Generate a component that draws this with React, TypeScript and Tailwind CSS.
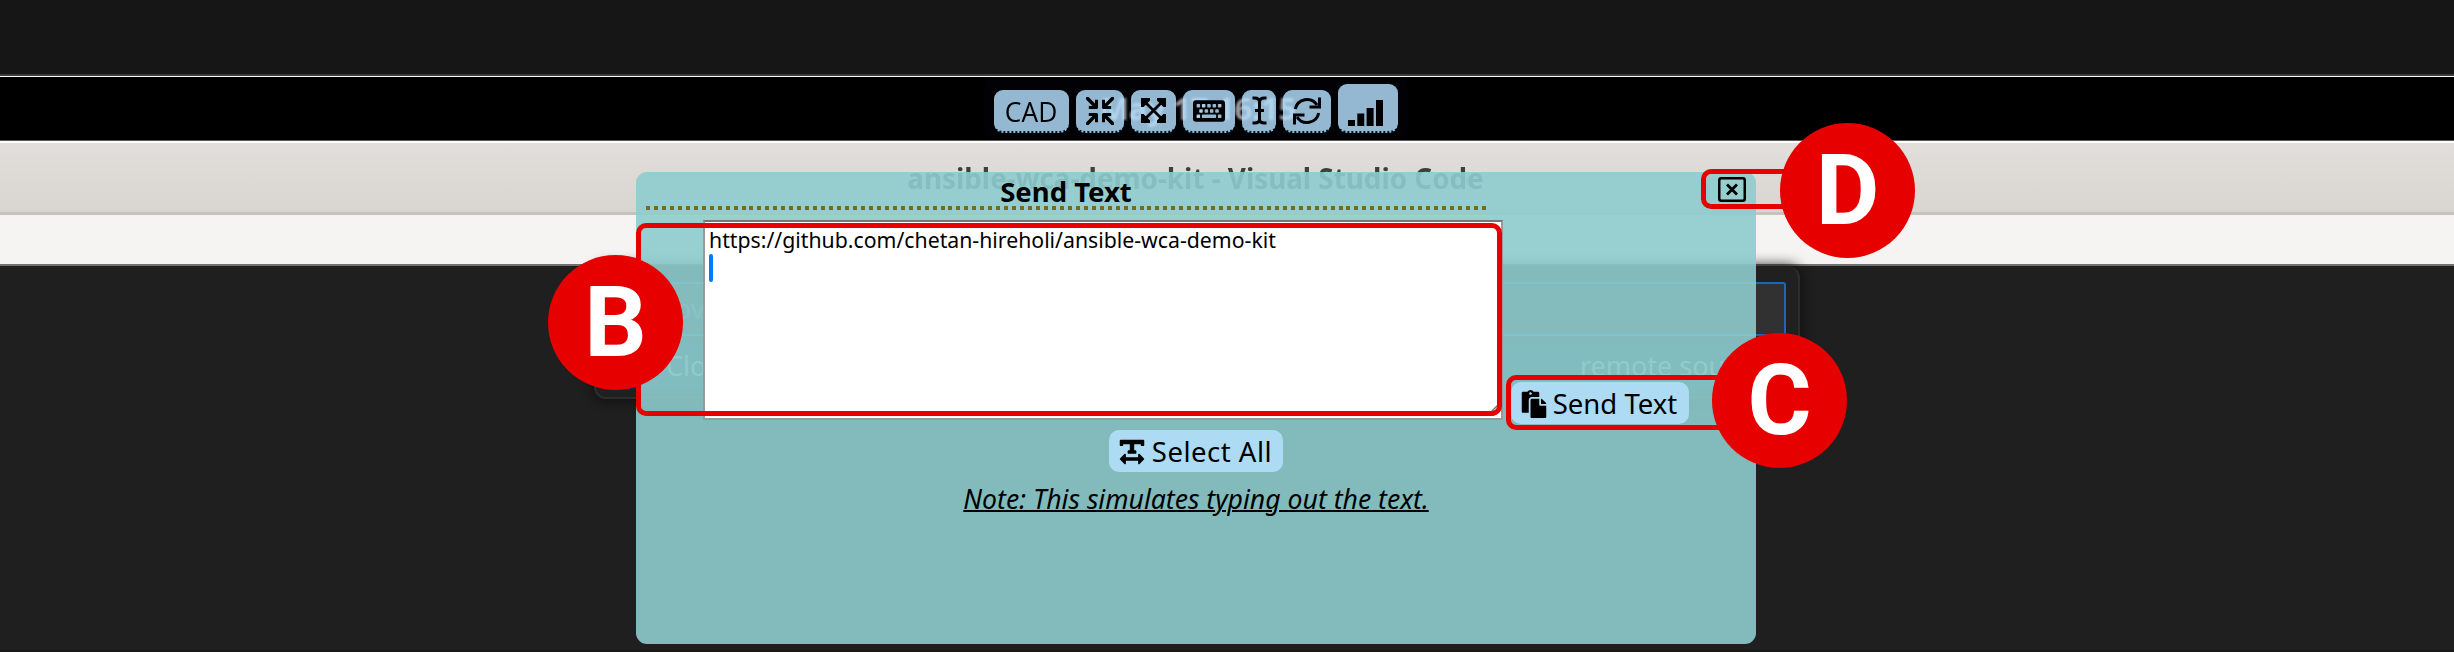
import React from "react";
import { FaKeyboard, FaPaste, FaTextWidth } from "react-icons/fa";

const toolButton =
  "flex h-[43px] shrink-0 items-center justify-center rounded-[9px] border-b-2 border-dotted border-[#05131f] bg-[#b4e0ff]/82 text-black";

function Inward() {
  return (
    <svg className="size-7" viewBox="0 0 28 28" fill="none" stroke="currentColor" strokeWidth="3" strokeLinejoin="round">
      <path d="M1.500 1.500 9.500 9.500M26.500 1.500 18.500 9.500M1.500 26.500 9.500 18.500M26.500 26.500 18.500 18.500" strokeWidth="3.400" strokeLinecap="round" />
      <path d="M10.500 2.800V10.500H2.800M17.500 2.800V10.500H25.200M2.800 17.500H10.500V25.200M25.200 17.500H17.500V25.200" />
    </svg>
  );
}

function Outward() {
  return (
    <svg className="size-[25px]" viewBox="0 0 25 25" fill="none" stroke="currentColor" strokeWidth="2.8">
      <path d="M3 3 22 22M22 3 3 22" />
      <path fill="currentColor" stroke="none" d="M0 0H9V2.500L2.500 9H0ZM25 0V9H22.500L16 2.500V0ZM0 25V16H2.500L9 22.500V25ZM25 25H16V22.500L22.500 16H25Z" />
    </svg>
  );
}

function TextCursor() {
  return (
    <svg className="h-[29px] w-[15px]" viewBox="0 0 15 29" fill="none" stroke="currentColor" strokeWidth="3">
      <path d="M0.500 2H2.500Q7.500 2 7.500 6V23Q7.500 27 2.500 27H0.500M14.500 2H12.500Q7.500 2 7.500 6M14.500 27H12.500Q7.500 27 7.500 23M3 14.500H12" />
    </svg>
  );
}

function Refresh() {
  return (
    <svg className="size-7" viewBox="0 0 28 28" fill="none" stroke="currentColor" strokeWidth="3">
      <path d="M2.300 12A11.900 11.900 0 0 1 24 8M25.700 16A11.900 11.900 0 0 1 4 20" />
      <path d="M26.500 0.500V10H16.500M1.500 27.500V18H11.500" />
    </svg>
  );
}

function Signal() {
  return (
    <svg className="h-[26px] w-[35px]" viewBox="0 0 35 26" fill="currentColor">
      <path d="M0 20H7V26H0ZM9.300 13.500H16.300V26H9.300ZM18.600 8H25.600V26H18.600ZM28 0H35V26H28Z" />
    </svg>
  );
}

function CloseBox() {
  return (
    <svg className="h-[25px] w-7" viewBox="0 0 28 25" fill="none" stroke="currentColor">
      <rect x="1.250" y="1.250" width="25.500" height="22.500" rx="2" strokeWidth="2.500" />
      <path d="M9 7.500 19 17.500M19 7.500 9 17.500" strokeWidth="2.800" />
    </svg>
  );
}

function Marker({ letter, className }: { letter: string; className: string }) {
  return (
    <div className={`absolute flex size-[135px] items-center justify-center rounded-full bg-[#e60000] font-['Roboto',sans-serif] text-[98px] leading-none font-bold text-white ${className}`}>
      <span className="block">{letter}</span>
    </div>
  );
}

function Desktop() {
  return (
    <div className="flex h-[652px] w-full flex-col">
      <div className="h-[74px] shrink-0 bg-[#161616]" />
      <div className="h-[3px] shrink-0 border-b border-white bg-[#3b3b3b]" />
      <div className="flex h-[63px] shrink-0 items-center justify-center bg-black pr-[58px]">
        <span className="text-[31px] font-bold whitespace-nowrap text-white blur-[1px]">May 17 16:15</span>
      </div>
      <div className="h-[3px] shrink-0 border-t border-[#5c5654] bg-white" />
      <div className="flex h-[72px] shrink-0 justify-center border-b-3 border-[#c9c1bc] bg-linear-to-b from-[#e2dedb] to-[#d8d6d1] pt-[15px] pr-[63px]">
        <span className="text-[27.8px] leading-[40px] font-bold whitespace-nowrap text-[#3b3f40] blur-[0.7px]">
          ansible-wca-demo-kit - Visual Studio Code
        </span>
      </div>
      <div className="h-[51px] shrink-0 border-b-2 border-[#707070] bg-[#f5f4f2]" />
      <div className="flex grow justify-center border-b-2 border-[#191919] bg-[#1f1f1f] pr-[60px]">
        <div className="h-[133px] w-[1206px] rounded-[12px] border-2 border-t-0 border-[#2d2d2d] bg-[#202020] px-3 pt-[16px] text-[27px] text-[#b4b4b4] shadow-[0_0_14px_#0b0b0b]">
          <div className="flex h-[54px] items-center rounded-[3px] border-2 border-[#1a68b5] bg-[#313131] pl-[38px] text-[#666]">Provide</div>
          <div className="mt-[7px] flex h-[46px] items-center justify-between bg-[#04395e]/60 pr-[9px] pl-[58px]">
            <span>Clone from URL</span>
            <span>remote sources</span>
          </div>
        </div>
      </div>
    </div>
  );
}

export default function App() {
  return (
    <main className="relative h-[652px] w-[2454px] overflow-hidden bg-[#1f1f1f] font-['Noto_Sans',sans-serif]">
      <Desktop />

      <nav className="absolute top-[77px] left-[984px] flex h-[62px] w-[424px] items-end gap-[7px] rounded-[10px] bg-[#050510]/40 px-[10px] pb-[6px]">
        <button className={`${toolButton} w-[75px]`}>
          <span className="block origin-center scale-x-[0.94] font-['Open_Sans',sans-serif] text-[28px] tracking-[0.2px]">CAD</span>
        </button>
        <button className={`${toolButton} w-[48px]`}><Inward /></button>
        <button className={`${toolButton} w-[45px]`}><Outward /></button>
        <button className={`${toolButton} w-[52px]`}><FaKeyboard className="size-8" /></button>
        <button className={`${toolButton} w-[34px]`}><TextCursor /></button>
        <button className={`${toolButton} w-[48px]`}><Refresh /></button>
        <button className={`${toolButton} h-[49px]! w-[60px] pt-[10px] pr-[5px]`}><Signal /></button>
      </nav>

      <section className="absolute top-[172px] left-[636px] h-[472px] w-[1120px] rounded-[11px] bg-[#8eccce]/90 text-black">
        <header className="flex h-[54px] items-start justify-between">
          <div className="ml-[10px] w-[840px]">
            <h1 className="h-[34px] text-center text-[27.5px] leading-[39px] font-bold">
              <span className="inline-block">Send Text</span>
            </h1>
            <div className="h-1 w-full bg-[repeating-linear-gradient(to_right,#756b1c_0_4px,transparent_4px_7.96px)]" />
          </div>
          <button className="mt-[5px] mr-[10px]"><CloseBox /></button>
        </header>
        <div className="-mt-[6px] flex items-end pl-[67px]">
          <div className="relative h-[200px] w-[800px] border-2 border-[#999] border-t-[#767676] bg-white pl-[4px]">
            <p className="h-8 pt-[3px] text-[21.25px] leading-[30px] whitespace-nowrap">
              <span className="inline-block">https://github.com/chetan-hireholi/ansible-wca-demo-kit</span>
            </p>
            <div className="h-7 w-1 rounded-full bg-[#007aff]" />
            <svg className="absolute right-[2px] bottom-[2px] size-3" viewBox="0 0 12 12" stroke="#777" strokeWidth="1.500">
              <path d="M0 12 12 0M6 12 12 6" />
            </svg>
          </div>
          <button className="mb-[-4px] ml-2 flex h-[42px] w-[178px] items-center justify-center gap-[5px] rounded-[10px] bg-[#addbf4] pt-px pr-[3px] text-[27.5px]">
            <FaPaste className="size-7" /><span>Send Text</span>
          </button>
        </div>
        <div className="flex flex-col items-center">
          <button className="mt-[10px] flex h-[42px] w-[174px] items-center justify-center gap-[6px] rounded-[10px] bg-[#addbf4] pt-px pr-[2px] text-[27.5px] tracking-[0.5px]">
            <FaTextWidth className="size-7" /><span>Select All</span>
          </button>
          <p className="mt-[8px] text-[26.6px] leading-[39px] italic underline decoration-2">Note: This simulates typing out the text.</p>
        </div>
      </section>

      <div className="absolute top-[223px] left-[636px] h-[193px] w-[866px] rounded-[10px] border-5 border-[#e60000]" />
      <div className="absolute top-[375px] left-[1506px] h-[55px] w-[250px] rounded-[10px] border-5 border-[#e60000]" />
      <div className="absolute top-[169px] left-[1701px] h-[40px] w-[120px] rounded-[10px] border-5 border-[#e60000]" />
      <Marker letter="B" className="top-[255px] left-[548px]" />
      <Marker letter="C" className="top-[333px] left-[1712px]" />
      <Marker letter="D" className="top-[123px] left-[1780px]" />
    </main>
  );
}
